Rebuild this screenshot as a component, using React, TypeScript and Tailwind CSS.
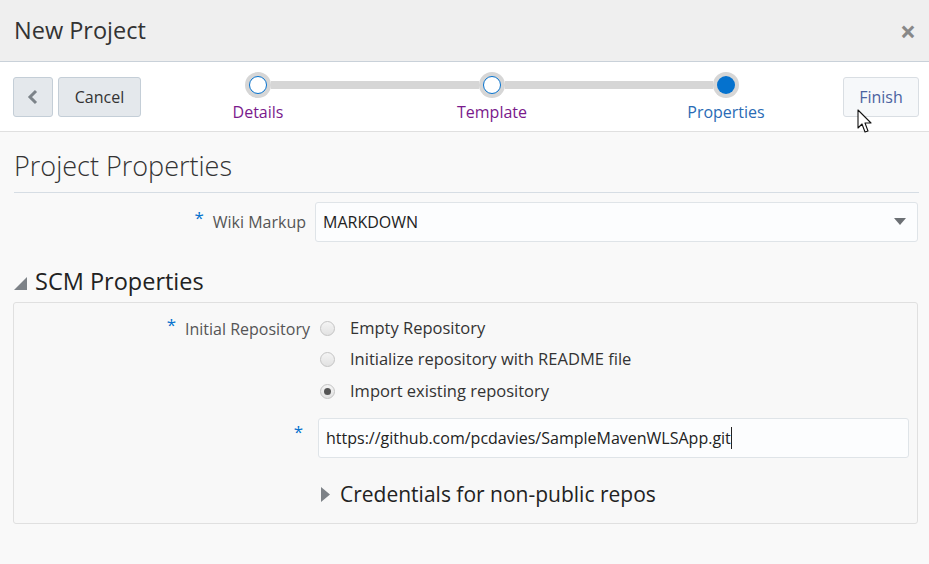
import React from "react";

const font = { fontFamily: '"Open Sans", "Noto Sans", sans-serif' };

function Step({ label, first, last, current }: { label: string; first?: boolean; last?: boolean; current?: boolean }) {
  return (
    <div className="flex w-[234px] flex-col items-center pt-[10px]">
      <div className="flex w-full items-center">
        <div className={`h-[8px] flex-1 ${first ? "" : "bg-[#d6d6d6]"}`} />
        <div className="flex h-[26px] w-[26px] items-center justify-center rounded-full bg-[#d6d6d6]">
          {current ? (
            <div className="h-[18px] w-[18px] rounded-full bg-[#0572ce]" />
          ) : (
            <div className="h-[18px] w-[18px] rounded-full border-[1.5px] border-[#0572ce] bg-white" />
          )}
        </div>
        <div className={`h-[8px] flex-1 ${last ? "" : "bg-[#d6d6d6]"}`} />
      </div>
      <div className={`mt-[3px] text-[16px] leading-[22px] ${current ? "text-[#2a6bb5]" : "text-[#7a1a8c]"}`}>{label}</div>
    </div>
  );
}

function Radio({ checked, label }: { checked?: boolean; label: string }) {
  return (
    <div className="flex h-[31.5px] items-center">
      <div className="flex h-[15px] w-[15px] items-center justify-center rounded-full border border-[#c4c4c4] bg-gradient-to-b from-[#f4f4f4] to-[#e2e2e2]">
        {checked && <div className="h-[7px] w-[7px] rounded-full bg-[#555]" />}
      </div>
      <span className="ml-[15px] text-[16.5px] text-[#333]">{label}</span>
    </div>
  );
}

function Req() {
  return <span className="relative -top-[4px] mr-[9px] text-[17px] text-[#0572ce]">*</span>;
}

export default function App() {
  return (
    <div className="relative h-[564px] w-[929px] overflow-hidden bg-[#f9f9f9] text-[#333]" style={font}>
      {/* header */}
      <div className="flex h-[62px] items-center justify-between border-b border-[#c9d1d9] bg-[#efefef] pl-[14px] pr-[13px]">
        <div className="text-[23.5px] text-[#333]">New Project</div>
        <div className="text-[28px] font-bold leading-none text-[#888]">×</div>
      </div>

      {/* toolbar */}
      <div className="flex h-[70px] border-b border-[#e0e0e0] bg-white pl-[13px]">
        <div className="flex pt-[15px]">
          <button className="flex h-[40px] w-[40px] items-center justify-center rounded-[3px] border border-[#c4ced7] bg-[#e4e8ec]">
            <svg width="12" height="16" viewBox="0 0 12 16">
              <path d="M9 2 L3 8 L9 14" fill="none" stroke="#7c8389" strokeWidth="3" />
            </svg>
          </button>
          <button className="ml-[5px] h-[40px] w-[83px] rounded-[3px] border border-[#c4ced7] bg-[#e4e8ec] text-[16px] text-[#333]">Cancel</button>
        </div>
        <div className="flex">
          <Step label="Details" first />
          <Step label="Template" />
          <Step label="Properties" last current />
        </div>
        <div className="pt-[15px]">
          <button className="h-[40px] w-[76px] rounded-[3px] border border-[#d9dee3] bg-[#f6f8fa] text-[16px] text-[#4b63a0]">Finish</button>
        </div>
      </div>

      {/* content */}
      <div className="pl-[13px] pr-[10px]">
        <div className="ml-[1px] border-b border-[#d6dde4] pb-[6px] pt-[14px] text-[27px] font-light leading-[40px] text-[#333]">
          Project Properties
        </div>

        <div className="mt-[9px] flex h-[40px] items-center pr-[1px]">
          <div className="w-[293px] text-right text-[16px] text-[#555]">
            <Req />Wiki Markup
          </div>
          <div className="ml-[9px] flex h-[40px] flex-1 items-center justify-between rounded-[3px] border border-[#dfe4e8] bg-[#fcfdfe] pl-[7px] pr-[11px]">
            <span className="text-[16px] text-[#222]">MARKDOWN</span>
            <svg width="12" height="8" viewBox="0 0 12 8">
              <path d="M0 0 H12 L6 7 Z" fill="#6c7074" />
            </svg>
          </div>
        </div>

        <div className="mt-[22px] flex items-center">
          <svg width="13" height="13" viewBox="0 0 13 13" className="ml-[1px] mt-[4px]">
            <path d="M13 0 V13 H0 Z" fill="#7d8287" />
          </svg>
          <span className="ml-[8px] text-[23.5px] text-[#222]">SCM Properties</span>
        </div>

        <div className="mr-[1px] mt-[3px] h-[222px] rounded-[3px] border border-[#e0e0e0] bg-[#f8f8f8]">
          <div className="flex pt-[9px]">
            <div className="w-[296px] pt-[4px] text-right text-[16px] text-[#555]">
              <Req />Initial Repository
            </div>
            <div className="ml-[10px]">
              <Radio label="Empty Repository" />
              <Radio label="Initialize repository with README file" />
              <Radio checked label="Import existing repository" />
            </div>
          </div>
          <div className="mt-[11px] flex h-[40px]">
            <div className="w-[289px] pt-[1px] text-right">
              <span className="text-[17px] text-[#0572ce]">*</span>
            </div>
            <div className="ml-[15px] mr-[8px] flex flex-1 items-center rounded-[3px] border border-[#dfe4e8] bg-[#fcfdfe] pl-[7px]">
              <span className="text-[16px] text-[#222]">https://github.com/pcdavies/SampleMavenWLSApp.git</span>
              <span className="h-[22px] w-[1px] bg-[#222]" />
            </div>
          </div>
          <div className="ml-[307px] mt-[21px] flex items-center">
            <svg width="10" height="15" viewBox="0 0 10 15">
              <path d="M0 0 L9 7.5 L0 15 Z" fill="#7d8287" />
            </svg>
            <span className="ml-[9px] text-[21px] text-[#222]">Credentials for non-public repos</span>
          </div>
        </div>
      </div>

      {/* mouse cursor */}
      <svg className="absolute left-[857px] top-[109px]" width="16" height="26" viewBox="0 0 16 26">
        <path d="M1 1 L1 19 L5 15 L8 23 L11 22 L8 14 L14 14 Z" fill="white" stroke="#111" strokeWidth="1.1" strokeLinejoin="round" />
      </svg>
    </div>
  );
}
